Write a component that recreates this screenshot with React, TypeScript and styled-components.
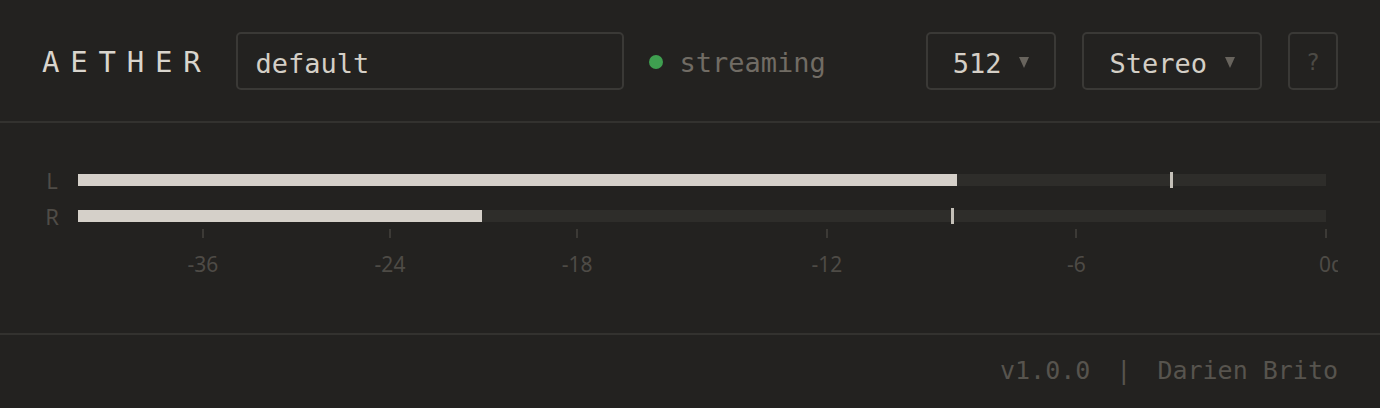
import React from "react";
import styled, { createGlobalStyle } from "styled-components";

const Global = createGlobalStyle`
  html, body { margin: 0; padding: 0; background: #232220; }
  body { width: 1380px; height: 408px; overflow: hidden; }
  * { box-sizing: border-box; }
`;

const MONO = `"DejaVu Sans Mono", "Liberation Mono", monospace`;
const SANS = `"Noto Sans", "DejaVu Sans", sans-serif`;

const Shell = styled.div`
  width: 1380px;
  height: 408px;
  background: #232220;
  display: flex;
  flex-direction: column;
  font-family: ${MONO};
`;

const Header = styled.header`
  height: 123px;
  flex: none;
  display: flex;
  align-items: center;
  padding: 0 42px;
  border-bottom: 2px solid #33322f;
`;

const Logo = styled.div`
  font-family: ${MONO};
  font-size: 29px;
  font-weight: 300;
  letter-spacing: 10.8px;
  color: #d9d5cd;
  margin-right: 24px;
  padding-top: 4px;
  line-height: 1;
`;

const DeviceInput = styled.input`
  width: 388px;
  height: 58px;
  background: transparent;
  border: 2px solid #3a3936;
  border-radius: 5px;
  padding: 5px 18px 0 18px;
  font-family: ${MONO};
  font-size: 27px;
  color: #d4cfc6;
  outline: none;
`;

const Status = styled.div`
  display: flex;
  align-items: center;
  gap: 17px;
  margin-left: 25px;
  padding-top: 4px;
  font-size: 27px;
  color: #716c64;
`;

const Dot = styled.span<{ $color: string }>`
  width: 14px;
  height: 14px;
  border-radius: 50%;
  background: ${(p) => p.$color};
  flex: none;
  margin-top: -2px;
`;

const Spacer = styled.div`
  flex: 1;
`;

const Controls = styled.div`
  display: flex;
  align-items: center;
  gap: 26px;
`;

const Select = styled.button`
  height: 58px;
  display: flex;
  align-items: center;
  gap: 18px;
  padding: 5px 25px 0 25px;
  background: transparent;
  border: 2px solid #3a3936;
  border-radius: 5px;
  font-family: ${MONO};
  font-size: 27px;
  color: #d4cfc6;
  cursor: pointer;
`;

const Caret = styled.span`
  width: 0;
  height: 0;
  border-left: 5.5px solid transparent;
  border-right: 5.5px solid transparent;
  border-top: 11px solid #68645d;
  margin-top: -1px;
`;

const HelpButton = styled.button`
  width: 50px;
  height: 58px;
  background: transparent;
  border: 2px solid #3a3936;
  border-radius: 5px;
  font-family: ${MONO};
  font-size: 23px;
  color: #4c4a45;
  display: flex;
  align-items: center;
  justify-content: center;
  padding: 2px 0 0 0;
`;

const MeterSection = styled.section`
  height: 212px;
  flex: none;
  padding: 45px 42px 0 42px;
  border-bottom: 2px solid #33322f;
`;

const MeterInner = styled.div`
  overflow: hidden;
  height: 100%;
  display: flex;
  flex-direction: column;
  gap: 12px;
`;

const ChannelRow = styled.div`
  display: flex;
  align-items: center;
  height: 24px;
  gap: 16px;
  padding-right: 12px;
`;

const ChannelLabel = styled.span`
  width: 20px;
  text-align: center;
  font-family: ${SANS};
  font-size: 22px;
  line-height: 24px;
  color: #4f4c47;
`;

const Track = styled.div`
  position: relative;
  flex: 1;
  height: 12px;
  background: #2e2d2a;
`;

const Fill = styled.div`
  position: absolute;
  left: 0;
  top: 0;
  bottom: 0;
  background: #d5d0c9;
`;

const Peak = styled.div`
  position: absolute;
  top: -2px;
  bottom: -2px;
  width: 3px;
  margin-left: -1px;
  background: #c4c0b8;
`;

const Scale = styled.div`
  position: relative;
  height: 60px;
  margin: -11px 12px 0 36px;
`;

const Tick = styled.div`
  position: absolute;
  top: 0;
  width: 2px;
  height: 9px;
  margin-left: -1px;
  background: #3c3a36;
`;

const TickLabel = styled.span<{ $edge?: boolean }>`
  position: absolute;
  top: 25px;
  transform: ${(p) => (p.$edge ? "translateX(-7px)" : "translateX(-50%)")};
  font-family: ${SANS};
  font-size: 21px;
  line-height: 20px;
  color: #4e4b46;
  white-space: nowrap;
`;

const Footer = styled.footer`
  flex: 1;
  display: flex;
  align-items: center;
  justify-content: flex-end;
  gap: 26px;
  padding: 0 42px 2px 42px;
  font-family: ${MONO};
  font-size: 25px;
  color: #57544e;
`;

const channels = [
  { name: "L", level: 0.7044, peak: 0.876 },
  { name: "R", level: 0.3237, peak: 0.7005 },
];

const ticks = [
  { label: "-36", pos: 0.1 },
  { label: "-24", pos: 0.25 },
  { label: "-18", pos: 0.4 },
  { label: "-12", pos: 0.6 },
  { label: "-6", pos: 0.8 },
  { label: "0dB", pos: 1 },
];

export default function App() {
  return (
    <>
      <Global />
      <Shell>
        <Header>
          <Logo>AETHER</Logo>
          <DeviceInput defaultValue="default" spellCheck={false} />
          <Status>
            <Dot $color="#3f9f50" />
            streaming
          </Status>
          <Spacer />
          <Controls>
            <Select>
              512 <Caret />
            </Select>
            <Select>
              Stereo <Caret />
            </Select>
            <HelpButton>?</HelpButton>
          </Controls>
        </Header>
        <MeterSection>
          <MeterInner>
            {channels.map((c) => (
              <ChannelRow key={c.name}>
                <ChannelLabel>{c.name}</ChannelLabel>
                <Track>
                  <Fill style={{ width: `${c.level * 100}%` }} />
                  <Peak style={{ left: `${c.peak * 100}%` }} />
                </Track>
              </ChannelRow>
            ))}
            <Scale>
              {ticks.map((t) => (
                <React.Fragment key={t.label}>
                  <Tick style={{ left: `${t.pos * 100}%` }} />
                  <TickLabel $edge={t.pos === 1} style={{ left: `${t.pos * 100}%` }}>
                    {t.label}
                  </TickLabel>
                </React.Fragment>
              ))}
            </Scale>
          </MeterInner>
        </MeterSection>
        <Footer>
          <span>v1.0.0</span>
          <span>|</span>
          <span>Darien Brito</span>
        </Footer>
      </Shell>
    </>
  );
}
